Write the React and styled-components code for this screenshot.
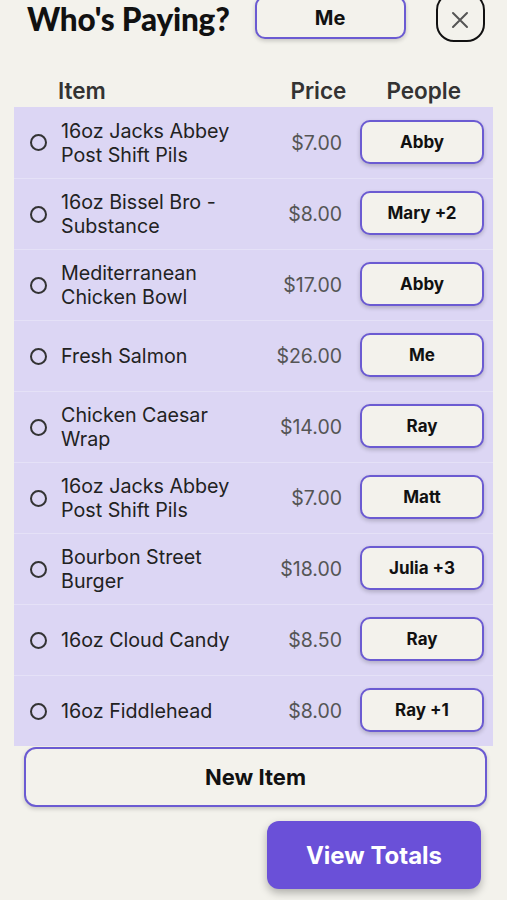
import React from "react";
import styled, { createGlobalStyle } from "styled-components";

const Global = createGlobalStyle`
  html, body { margin: 0; padding: 0; background: #f3f2ec; }
  body { font-family: Inter, "Noto Sans", sans-serif; overflow: hidden; }
  * { box-sizing: border-box; }
`;

const Page = styled.div`
  width: 507px;
  height: 900px;
  background: #f3f2ec;
  display: flex;
  flex-direction: column;
`;

const Header = styled.div`
  display: flex;
  align-items: flex-end;
  height: 42px;
  padding-left: 27px;
`;

const Title = styled.h1`
  margin: 0 0 4px 0;
  white-space: nowrap;
  font-family: Lato, "Noto Sans", sans-serif;
  font-weight: 900;
  font-size: 31.5px;
  line-height: 38px;
  color: #111;
  letter-spacing: -0.2px;
`;

const PayerButton = styled.button`
  margin: 0 0 3px 25px;
  width: 151px;
  height: 43px;
  border: 2px solid #6b5bd2;
  border-radius: 10px;
  background: #f3f2ec;
  box-shadow: 0 2px 4px rgba(0, 0, 0, 0.18);
  font-family: Inter, sans-serif;
  font-weight: 700;
  font-size: 20px;
  color: #111;
  padding: 0;
`;

const CloseButton = styled.button`
  margin-left: 30px;
  width: 49px;
  height: 50px;
  border: 2.5px solid #111;
  border-radius: 18px;
  background: transparent;
  display: flex;
  align-items: center;
  justify-content: center;
  padding: 0;
  padding-top: 6px;
  color: #555;
`;

const Columns = styled.div`
  display: flex;
  align-items: center;
  height: 33px;
  margin-top: 32px;
  padding: 0 46px 0 58px;
  font-weight: 600;
  font-size: 22.5px;
  color: #333;
`;

const ColItem = styled.span`
  flex: 1;
`;

const ColPrice = styled.span`
  width: 96px;
`;

const Panel = styled.div`
  margin: 0 14px;
  background: #dcd6f4;
  display: flex;
  flex-direction: column;
`;

const Row = styled.div`
  height: 71px;
  display: flex;
  align-items: center;
  padding: 0 9px 0 16px;
  & + & {
    border-top: 1px solid rgba(255, 255, 255, 0.28);
  }
`;

const Radio = styled.span`
  width: 17px;
  height: 17px;
  border-radius: 50%;
  border: 2px solid #333;
  flex: none;
  margin-right: 14px;
`;

const ItemName = styled.span`
  flex: 1;
  font-size: 19.7px;
  line-height: 24px;
  color: #222;
`;

const Price = styled.span`
  font-size: 19.5px;
  color: #555;
  margin-right: 18px;
`;

const PeopleButton = styled.button`
  width: 124px;
  height: 44px;
  margin-top: -2px;
  border: 2px solid #6b5bd2;
  border-radius: 10px;
  background: #f3f2ec;
  box-shadow: 0 2px 4px rgba(0, 0, 0, 0.2);
  font-family: Inter, sans-serif;
  font-weight: 700;
  font-size: 17px;
  color: #111;
  padding: 0;
  flex: none;
`;

const NewItem = styled.button`
  margin: 1px 20px 0 24px;
  height: 60px;
  border: 2px solid #6b5bd2;
  border-radius: 12px;
  background: #f3f2ec;
  box-shadow: 0 2px 4px rgba(0, 0, 0, 0.18);
  font-family: Inter, sans-serif;
  font-weight: 700;
  font-size: 22px;
  color: #111;
`;

const Footer = styled.div`
  display: flex;
  justify-content: flex-end;
  padding-right: 26px;
  margin-top: 14px;
`;

const ViewTotals = styled.button`
  width: 214px;
  height: 68px;
  border: none;
  border-radius: 12px;
  background: #6a50d8;
  box-shadow: 0 4px 8px rgba(0, 0, 0, 0.28);
  font-family: Inter, sans-serif;
  font-weight: 700;
  font-size: 24px;
  color: #fff;
`;

const items = [
  [["16oz Jacks Abbey", "Post Shift Pils"], "$7.00", "Abby"],
  [["16oz Bissel Bro -", "Substance"], "$8.00", "Mary +2"],
  [["Mediterranean", "Chicken Bowl"], "$17.00", "Abby"],
  [["Fresh Salmon"], "$26.00", "Me"],
  [["Chicken Caesar", "Wrap"], "$14.00", "Ray"],
  [["16oz Jacks Abbey", "Post Shift Pils"], "$7.00", "Matt"],
  [["Bourbon Street", "Burger"], "$18.00", "Julia +3"],
  [["16oz Cloud Candy"], "$8.50", "Ray"],
  [["16oz Fiddlehead"], "$8.00", "Ray +1"],
];

export default function App() {
  return (
    <Page>
      <Global />
      <Header>
        <Title>Who's Paying?</Title>
        <PayerButton>Me</PayerButton>
        <CloseButton aria-label="close">
          <svg width="18" height="18" viewBox="0 0 18 18">
            <path d="M2 2 L16 16 M16 2 L2 16" stroke="#555" strokeWidth="2" strokeLinecap="round" />
          </svg>
        </CloseButton>
      </Header>
      <Columns>
        <ColItem>Item</ColItem>
        <ColPrice>Price</ColPrice>
        <span>People</span>
      </Columns>
      <Panel>
        {items.map(([name, price, who], i) => (
          <Row key={i}>
            <Radio />
            <ItemName>
              {name[0]}
              {name[1] && (
                <>
                  <br />
                  {name[1]}
                </>
              )}
            </ItemName>
            <Price>{price}</Price>
            <PeopleButton>{who}</PeopleButton>
          </Row>
        ))}
      </Panel>
      <NewItem>New Item</NewItem>
      <Footer>
        <ViewTotals>View Totals</ViewTotals>
      </Footer>
    </Page>
  );
}
